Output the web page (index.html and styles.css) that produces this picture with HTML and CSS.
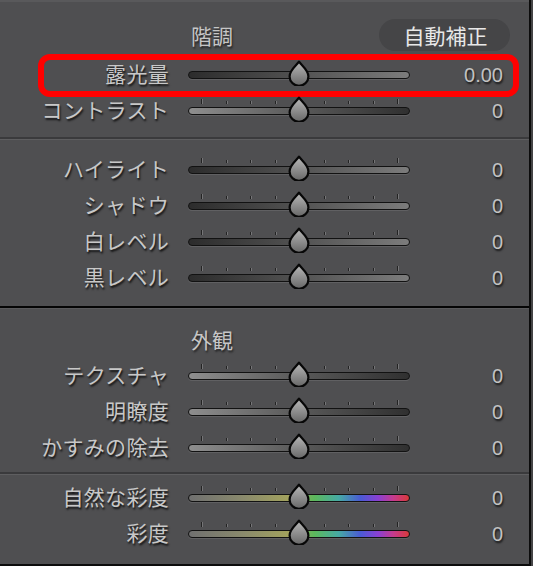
FILE: index.html
```html
<!DOCTYPE html>
<html lang="ja">
<head>
<meta charset="utf-8">
<title>階調</title>
<link rel="stylesheet" href="styles.css">
</head>
<body>
<svg width="0" height="0" class="defs">
  <defs>
    <linearGradient id="thumbFill" x1="0" y1="0" x2="0" y2="1">
      <stop offset="0" stop-color="#b8b8b8"/>
      <stop offset="0.55" stop-color="#8c8c8c"/>
      <stop offset="1" stop-color="#676767"/>
    </linearGradient>
    <symbol id="thumb" viewBox="0 0 24 26">
      <path d="M12 1.6 C14.2 5.2 21.4 9.8 21.4 16.4 A9.4 9.4 0 0 1 2.6 16.4 C2.6 9.8 9.8 5.2 12 1.6 Z" fill="url(#thumbFill)" stroke="#070707" stroke-width="2.2" stroke-linejoin="round"/>
    </symbol>
  </defs>
</svg>
<div class="panel">
  <section class="sec sec-tone">
    <div class="head">
      <span class="title">階調</span>
      <span class="auto">自動補正</span>
    </div>
    <div class="row highlight">
      <span class="label">露光量</span>
      <div class="slider">
        <div class="track g-up"></div>
        <svg class="thumb"><use href="#thumb"/></svg>
      </div>
      <span class="value">0.00</span>
    </div>
    <div class="row">
      <span class="label">コントラスト</span>
      <div class="slider ticked">
        <div class="ticks"><i class="tall"></i><i></i><i></i><i></i><i class="mid"></i><i></i><i></i><i></i><i class="tall"></i></div>
        <div class="track g-down"></div>
        <svg class="thumb"><use href="#thumb"/></svg>
      </div>
      <span class="value">0</span>
    </div>
  </section>
  <div class="sep"></div>
  <section class="sec sec-light">
    <div class="row">
      <span class="label">ハイライト</span>
      <div class="slider ticked">
        <div class="ticks"><i class="tall"></i><i></i><i></i><i></i><i class="mid"></i><i></i><i></i><i></i><i class="tall"></i></div>
        <div class="track g-up"></div>
        <svg class="thumb"><use href="#thumb"/></svg>
      </div>
      <span class="value">0</span>
    </div>
    <div class="row">
      <span class="label">シャドウ</span>
      <div class="slider ticked">
        <div class="ticks"><i class="tall"></i><i></i><i></i><i></i><i class="mid"></i><i></i><i></i><i></i><i class="tall"></i></div>
        <div class="track g-up"></div>
        <svg class="thumb"><use href="#thumb"/></svg>
      </div>
      <span class="value">0</span>
    </div>
    <div class="row">
      <span class="label">白レベル</span>
      <div class="slider ticked">
        <div class="ticks"><i class="tall"></i><i></i><i></i><i></i><i class="mid"></i><i></i><i></i><i></i><i class="tall"></i></div>
        <div class="track g-up"></div>
        <svg class="thumb"><use href="#thumb"/></svg>
      </div>
      <span class="value">0</span>
    </div>
    <div class="row">
      <span class="label">黒レベル</span>
      <div class="slider ticked">
        <div class="ticks"><i class="tall"></i><i></i><i></i><i></i><i class="mid"></i><i></i><i></i><i></i><i class="tall"></i></div>
        <div class="track g-up"></div>
        <svg class="thumb"><use href="#thumb"/></svg>
      </div>
      <span class="value">0</span>
    </div>
  </section>
  <div class="sep sep-black"></div>
  <section class="sec sec-presence">
    <div class="head head-plain">
      <span class="title">外観</span>
    </div>
    <div class="row">
      <span class="label">テクスチャ</span>
      <div class="slider ticked">
        <div class="ticks"><i class="tall"></i><i></i><i></i><i></i><i class="mid"></i><i></i><i></i><i></i><i class="tall"></i></div>
        <div class="track g-down"></div>
        <svg class="thumb"><use href="#thumb"/></svg>
      </div>
      <span class="value">0</span>
    </div>
    <div class="row">
      <span class="label">明瞭度</span>
      <div class="slider ticked">
        <div class="ticks"><i class="tall"></i><i></i><i></i><i></i><i class="mid"></i><i></i><i></i><i></i><i class="tall"></i></div>
        <div class="track g-down"></div>
        <svg class="thumb"><use href="#thumb"/></svg>
      </div>
      <span class="value">0</span>
    </div>
    <div class="row">
      <span class="label">かすみの除去</span>
      <div class="slider ticked">
        <div class="ticks"><i class="tall"></i><i></i><i></i><i></i><i class="mid"></i><i></i><i></i><i></i><i class="tall"></i></div>
        <div class="track g-down"></div>
        <svg class="thumb"><use href="#thumb"/></svg>
      </div>
      <span class="value">0</span>
    </div>
  </section>
  <div class="sep"></div>
  <section class="sec sec-color">
    <div class="row">
      <span class="label">自然な彩度</span>
      <div class="slider ticked">
        <div class="ticks"><i class="tall"></i><i></i><i></i><i></i><i class="mid"></i><i></i><i></i><i></i><i class="tall"></i></div>
        <div class="track g-color"></div>
        <svg class="thumb"><use href="#thumb"/></svg>
      </div>
      <span class="value">0</span>
    </div>
    <div class="row">
      <span class="label">彩度</span>
      <div class="slider ticked">
        <div class="ticks"><i class="tall"></i><i></i><i></i><i></i><i class="mid"></i><i></i><i></i><i></i><i class="tall"></i></div>
        <div class="track g-color"></div>
        <svg class="thumb"><use href="#thumb"/></svg>
      </div>
      <span class="value">0</span>
    </div>
  </section>
</div>
</body>
</html>
```

FILE: styles.css
```css
html, body {
  margin: 0;
  padding: 0;
}
body {
  background: #444446;
  width: 533px;
  height: 566px;
  overflow: hidden;
  font-family: "Noto Sans CJK JP", "Noto Sans", sans-serif;
}
.defs {
  position: absolute;
  width: 0;
  height: 0;
}
.panel {
  width: 529px;
  height: 564px;
  background: #4f4f51;
  border-right: 2px solid #0c0c0c;
  border-bottom: 2px solid #0c0c0c;
  display: flex;
  flex-direction: column;
}
.sec {
  display: flex;
  flex-direction: column;
}
.sec-tone {
  border-top: 2px solid #59595b;
  padding: 17px 0 8px;
}
.sec-light {
  padding: 12px 0 10px;
}
.sec-presence {
  padding: 15px 0 6px;
}
.sec-color {
  padding: 5px 0 0;
}
.sep {
  height: 2px;
  background: #3a3a3c;
  border-bottom: 1px solid #5e5e60;
}
.sep.sep-black {
  background: #050505;
  border-bottom: 1px solid #5a5a5c;
}
.head {
  display: flex;
  align-items: center;
  height: 32px;
  margin-bottom: 6px;
}
.head-plain {
  height: 30px;
  margin-bottom: 4px;
}
.title {
  margin-left: 191px;
  font-size: 21px;
  color: #c6c6c6;
  text-shadow: 1px 2px 2px rgba(0, 0, 0, 0.55);
  line-height: 30px;
}
.auto {
  margin-left: auto;
  margin-right: 19px;
  width: 131px;
  height: 32px;
  border-radius: 16px;
  background: #454547;
  color: #e8e8e8;
  font-size: 21px;
  line-height: 32px;
  text-align: center;
  box-sizing: border-box;
  padding-left: 2px;
}
.row {
  position: relative;
  display: grid;
  grid-template-columns: 169px 222px 1fr;
  column-gap: 19px;
  height: 36px;
  align-items: center;
}
.highlight::after {
  content: "";
  position: absolute;
  left: 38px;
  right: 10px;
  top: -3px;
  bottom: -4px;
  border: 6px solid #ff0000;
  border-radius: 12px;
  pointer-events: none;
}
.label {
  text-align: right;
  font-size: 21px;
  line-height: 33px;
  padding-bottom: 3px;
  color: #c8c8c8;
  white-space: nowrap;
  letter-spacing: 0.3px;
  text-shadow: 1px 2px 2px rgba(0, 0, 0, 0.8);
}
.value {
  text-align: right;
  padding-right: 26px;
  font-family: "Liberation Sans", "DejaVu Sans", sans-serif;
  font-size: 20px;
  line-height: 36px;
  color: #c2c2c2;
  text-shadow: 1px 2px 2px rgba(0, 0, 0, 0.75);
}
.slider {
  position: relative;
  height: 36px;
  display: flex;
  align-items: center;
}
.track {
  width: 100%;
  height: 8px;
  box-sizing: border-box;
  border: 1px solid #121212;
  border-radius: 4px;
  box-shadow: 0 1px 0 rgba(255, 255, 255, 0.1);
}
.g-up {
  background: linear-gradient(to right, #2c2c2c, #5a5a5a 60%, #7c7c7c);
}
.g-down {
  background: linear-gradient(to right, #8e8e8e, #5e5e5e 45%, #303030);
}
.g-color {
  background: linear-gradient(to right, #707070 0%, #8a8a6c 25%, #a4a45c 47%, #5cb85c 57%, #46aaa4 68%, #4a5ad4 78%, #8a40d2 86%, #c63a8c 93%, #d83a3a 100%);
}
.ticks {
  position: absolute;
  left: 13px;
  top: 6px;
  width: 197px;
  height: 5px;
  display: flex;
  justify-content: space-between;
  align-items: flex-end;
}
.ticks i {
  display: block;
  width: 1px;
  height: 3px;
  background: #232323;
  box-shadow: 1px 0 0 rgba(255, 255, 255, 0.22);
}
.ticks i.tall {
  height: 5px;
}
.ticks i.mid {
  visibility: hidden;
}
.thumb {
  position: absolute;
  left: 99px;
  top: 3px;
  width: 24px;
  height: 26px;
}
```
